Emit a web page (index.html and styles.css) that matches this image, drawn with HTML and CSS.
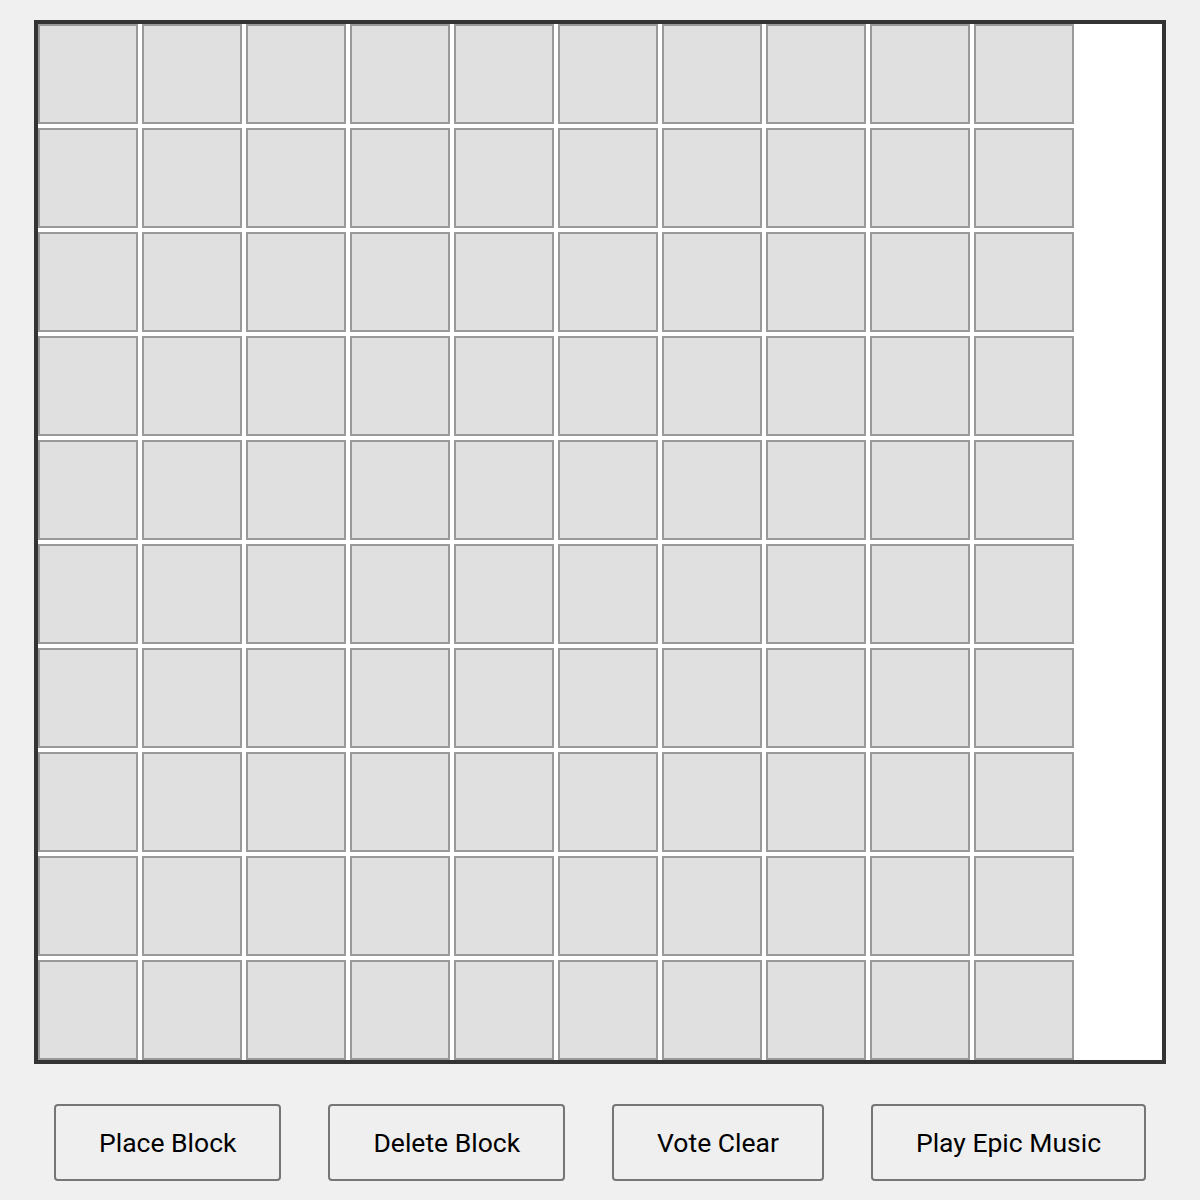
FILE: index.html
```html
<!DOCTYPE html>
<html>
<head>
<meta charset="utf-8">
<link rel="stylesheet" href="styles.css">
</head>
<body>
<div class="board" id="board"></div>
<div class="controls">
  <button class="btn">Place Block</button>
  <button class="btn">Delete Block</button>
  <button class="btn">Vote Clear</button>
  <button class="btn">Play Epic Music</button>
</div>
<script>
  var b = document.getElementById('board');
  for (var i = 0; i < 100; i++) {
    var c = document.createElement('div');
    c.className = 'cell';
    b.appendChild(c);
  }
</script>
</body>
</html>
```

FILE: styles.css
```css
html, body {
  margin: 0;
  padding: 0;
  background: #f0f0f0;
  font-family: Roboto, "Liberation Sans", sans-serif;
}
body {
  padding-top: 20px;
}
.board {
  width: 1124px;
  height: 1036px;
  margin: 0 auto;
  border: 4px solid #333;
  background: #fff;
  display: flex;
  flex-wrap: wrap;
  gap: 4px;
  align-content: flex-start;
}
.cell {
  width: 96px;
  height: 96px;
  background: #e0e0e0;
  border: 2px solid #999;
}
.controls {
  display: flex;
  justify-content: space-between;
  margin: 40px 54px 0;
}
.btn {
  font-family: Roboto, "Liberation Sans", sans-serif;
  font-size: 26.5px;
  color: #000;
  background: #efefef;
  border: 2px solid #767676;
  border-radius: 4px;
  padding: 22px 43px;
  line-height: 29px;
}
```
